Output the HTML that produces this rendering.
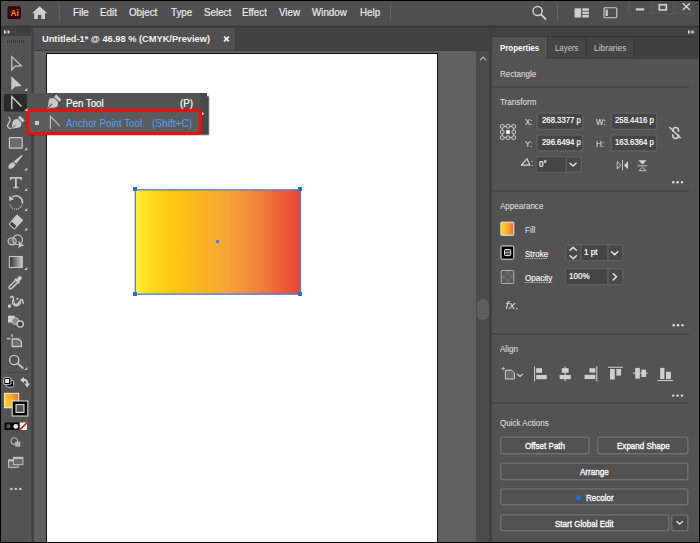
<!DOCTYPE html>
<html><head><meta charset="utf-8"><title>Illustrator</title>
<style>
html,body{margin:0;padding:0;background:#000;}
body{width:700px;height:543px;overflow:hidden;position:relative;font-family:"Liberation Sans",sans-serif;font-size:10px;color:#e6e6e6;}
#app{position:absolute;left:0;top:0;width:700px;height:543px;overflow:hidden;background:#000;}
.a{position:absolute;}
.t{position:absolute;white-space:nowrap;height:16px;line-height:16px;transform-origin:0 50%;}
.b{-webkit-text-stroke:0.22px currentColor;}
.c{-webkit-text-stroke:0.32px currentColor;}
.m{-webkit-text-stroke:0.2px currentColor;color:#ececec;}
svg{position:absolute;overflow:visible;}
.inp{position:absolute;background:#454545;border:1px solid #5f5f5f;border-radius:2px;box-sizing:border-box;}
.btn{position:absolute;border:1px solid #747474;border-radius:2px;box-sizing:border-box;background:#515151;}
.sep{position:absolute;height:2px;background:#474747;left:492px;width:197px;}
.u{text-decoration:underline dotted #d8d8d8;text-underline-offset:0.9px;text-decoration-thickness:1px;}
</style></head><body><div id="app">

<!-- top app bar -->
<div class="a" id="topbar" style="left:1px;top:1px;width:698px;height:24px;background:#4f4f4f;"></div>
<div class="a" style="left:1px;top:25px;width:698px;height:1px;background:#484848;"></div><div class="a" style="left:1px;top:26px;width:698px;height:1px;background:#383838;"></div>

<!-- second row backgrounds -->
<div class="a" style="left:1px;top:27px;width:30px;height:9px;background:#3f3f3f;"></div>
<div class="a" id="toolbar" style="left:1px;top:36px;width:30px;height:505.7px;background:#535353;"></div>
<div class="a" style="left:31px;top:27px;width:1px;height:514.7px;background:#464646;"></div><div class="a" style="left:32px;top:27px;width:1px;height:514.7px;background:#3f3f3f;"></div><div class="a" style="left:33px;top:27px;width:1px;height:514.7px;background:#484848;"></div>
<div class="a" id="tabbar" style="left:34px;top:27px;width:455px;height:23px;background:#424242;"></div>
<div class="a" id="tab" style="left:34px;top:27.6px;width:201px;height:22.8px;background:#505050;"></div>
<div class="a" style="left:1px;top:27px;width:698px;height:1px;background:#3d3d3d;"></div>
<div class="a" id="canvas" style="left:34px;top:50.4px;width:442px;height:491.3px;background:#606060;"></div>
<div class="a" style="left:34px;top:50px;width:455px;height:0.8px;background:#3c3c3c;"></div>
<div class="a" id="artboard" style="left:46px;top:52.6px;width:392px;height:489.1px;background:#fff;border-left:1px solid #111;border-top:1px solid #111;border-right:1px solid #111;box-sizing:border-box;"></div>
<div class="a" id="vscroll" style="left:476px;top:51px;width:13px;height:490.7px;background:#4b4b4b;"></div>
<div class="a" style="left:477px;top:299px;width:12px;height:21px;border-radius:6px;background:#5f5f5f;"></div>
<div class="a" style="left:489px;top:27px;width:3px;height:514.7px;background:#3e3e3e;"></div>

<!-- right panel -->
<div class="a" style="left:491.6px;top:28px;width:207.4px;height:9px;background:#424242;"></div>
<div class="a" style="left:491.6px;top:36px;width:207.4px;height:23px;background:#373737;"></div><div class="a" style="left:491.6px;top:37px;width:207.4px;height:21.6px;background:#414141;"></div>
<div class="a" id="panel" style="left:491.6px;top:59px;width:207.4px;height:482.7px;background:#535353;"></div>
<div class="a" style="left:491.6px;top:37px;width:55px;height:23px;background:#535353;"></div>
<div class="a" style="left:547.6px;top:37px;width:38.6px;height:21.6px;background:#444;"></div>
<div class="a" style="left:587.2px;top:37px;width:47px;height:21.6px;background:#444;"></div><div class="a" style="left:546.6px;top:37px;width:1px;height:21.6px;background:#373737;"></div><div class="a" style="left:586.2px;top:37px;width:1px;height:21.6px;background:#373737;"></div><div class="a" style="left:634.2px;top:37px;width:1px;height:21.6px;background:#373737;"></div>



<!-- artwork -->
<div class="a" id="art" style="left:135.5px;top:190px;width:165px;height:104px;background:linear-gradient(90deg,#fff035 0%,#fed71b 10%,#fdc90f 20%,#fbbb1e 35%,#f6a436 55%,#f1863c 72%,#ec6039 88%,#e84234 100%);"></div>
<svg width="700" height="543" viewBox="0 0 700 543" style="left:0;top:0;"><rect x="135.3" y="189.8" width="165.2" height="104.4" fill="none" stroke="#4f7de6" stroke-width="1.3"/></svg>
<div class="a" style="left:133px;top:187.2px;width:4.2px;height:4.2px;background:#2f66f0;"></div>
<div class="a" style="left:298px;top:187.2px;width:4.2px;height:4.2px;background:#2f66f0;"></div>
<div class="a" style="left:133px;top:291.8px;width:4.2px;height:4.2px;background:#2f66f0;"></div>
<div class="a" style="left:298px;top:291.8px;width:4.2px;height:4.2px;background:#2f66f0;"></div>
<div class="a" style="left:216px;top:240px;width:3.4px;height:3.4px;background:#4a7fe8;"></div>

<!-- menu text -->
<div class="t m" style="font-size:11px;transform:scaleX(0.89);left:73px;top:4px;">File</div>
<div class="t m" style="font-size:11px;transform:scaleX(0.89);left:100px;top:4px;">Edit</div>
<div class="t m" style="font-size:11px;transform:scaleX(0.89);left:129px;top:4px;">Object</div>
<div class="t m" style="font-size:11px;transform:scaleX(0.89);left:171px;top:4px;">Type</div>
<div class="t m" style="font-size:11px;transform:scaleX(0.89);left:203.5px;top:4px;">Select</div>
<div class="t m" style="font-size:11px;transform:scaleX(0.89);left:242px;top:4px;">Effect</div>
<div class="t m" style="font-size:11px;transform:scaleX(0.89);left:279px;top:4px;">View</div>
<div class="t m" style="font-size:11px;transform:scaleX(0.89);left:312px;top:4px;">Window</div>
<div class="t m" style="font-size:11px;transform:scaleX(0.89);left:360px;top:4px;">Help</div>
<div class="a" style="left:59px;top:4px;width:1.3px;height:16.6px;background:#646464;"></div>
<div class="a" style="left:390px;top:4px;width:1.3px;height:16.6px;background:#646464;"></div>
<div class="a" style="left:557.2px;top:4px;width:1.3px;height:16.6px;background:#646464;"></div>

<!-- doc tab -->
<div class="t" style="font-weight:bold;font-size:9.8px;transform:scaleX(0.945);left:42px;top:31.4px;color:#f0f0f0;">Untitled-1* @ 46.98 % (CMYK/Preview)</div>

<!-- flyout -->
<div class="a" style="left:27px;top:93.5px;width:180px;height:39.3px;background:#484848;box-shadow:2.2px 1.6px 1.2px rgba(10,10,10,0.75);"></div>
<div class="a" id="flyout" style="left:27px;top:93px;width:173px;height:40px;background:#535353;"></div>
<div class="a" style="left:200px;top:93px;width:7px;height:40px;background:#484848;"></div>
<div class="a" style="left:29px;top:112px;width:171px;height:21px;background:#5c5c5c;"></div>
<div class="t b" style="font-size:11.2px;transform:scaleX(0.87);left:66px;top:94.7px;color:#fff;">Pen Tool</div>
<div class="t b" style="font-size:11.2px;transform:scaleX(0.87);left:179.5px;top:94.7px;color:#fff;">(P)</div>
<div class="t" style="font-size:11.2px;transform:scaleX(0.87);left:66px;top:114.8px;color:#4aa0ff;">Anchor Point Tool</div>
<div class="t" style="font-size:11.2px;transform:scaleX(0.9);left:152px;top:114.8px;color:#4aa0ff;">(Shift+C)</div>
<div class="a" style="left:35px;top:121px;width:4px;height:4px;background:#c8c8c8;"></div>
<div class="a" id="redbox" style="left:26.2px;top:109.2px;width:176px;height:26.3px;border:3px solid #f70a0a;border-radius:4.5px;box-sizing:border-box;"></div>

<!-- panel text -->
<div class="t" style="font-size:9.2px;font-weight:bold;transform:scaleX(0.861);left:500px;top:40.2px;color:#fff;">Properties</div>
<div class="t" style="font-size:9.2px;transform:scaleX(0.853);left:554.5px;top:40.2px;color:#c8c8c8;">Layers</div>
<div class="t" style="font-size:9.2px;transform:scaleX(0.923);left:594px;top:40.2px;color:#c8c8c8;">Libraries</div>
<div class="t" style="font-size:9.2px;transform:scaleX(0.875);left:500px;top:66.4px;">Rectangle</div>
<div class="sep" style="top:86.2px;"></div>
<div class="t" style="font-size:9.2px;transform:scaleX(0.875);left:500px;top:94.1px;">Transform</div>
<div class="t" style="font-size:9.2px;transform:scaleX(0.875);left:525px;top:113.5px;">X:</div>
<div class="t" style="font-size:9.2px;transform:scaleX(0.875);left:525px;top:135.5px;">Y:</div>
<div class="t" style="font-size:9.2px;transform:scaleX(0.875);left:596px;top:113.5px;">W:</div>
<div class="t" style="font-size:9.2px;transform:scaleX(0.875);left:596.2px;top:135.5px;">H:</div>
<svg width="700" height="543" viewBox="0 0 700 543" style="left:0;top:0;" fill="none" stroke="#606060" stroke-width="1.4"><rect x="537.1" y="113.1" width="45.7" height="16.3" rx="2" fill="#464646"/><rect x="537.1" y="134.85" width="45.7" height="16.2" rx="2" fill="#464646"/><rect x="611.1" y="113.1" width="45.7" height="16.3" rx="2" fill="#464646"/><rect x="611.1" y="134.85" width="45.7" height="16.2" rx="2" fill="#464646"/></svg>
<div class="t b" style="font-size:9.2px;transform:scaleX(0.845);left:541.5px;top:112px;color:#fff;">268.3377 p</div>
<div class="t b" style="font-size:9.2px;transform:scaleX(0.845);left:541.5px;top:133.5px;color:#fff;">296.6494 p</div>
<div class="t b" style="font-size:9.2px;transform:scaleX(0.845);left:615.3px;top:112px;color:#fff;">258.4416 p</div>
<div class="t b" style="font-size:9.2px;transform:scaleX(0.845);left:615.3px;top:133.5px;color:#fff;">163.6364 p</div>
<svg width="700" height="543" viewBox="0 0 700 543" style="left:0;top:0;" fill="none" stroke="#5e5e5e" stroke-width="1.4"><rect x="536.1" y="156.9" width="45.2" height="15.4" rx="2.2" fill="#494949"/><rect x="536.8" y="157.6" width="28.7" height="14" fill="#444" stroke="none"/><path d="M566.2,156.9 V172.3"/><rect x="565.7" y="244.7" width="57.1" height="16.1" rx="2.2" fill="#494949"/><rect x="581.5" y="245.39999999999998" width="25.8" height="14.7" fill="#444" stroke="none"/><path d="M580.8,244.7 V260.8"/><path d="M608,244.7 V260.8"/><rect x="565.7" y="268.7" width="57.1" height="16.1" rx="2.2" fill="#494949"/><rect x="566.4" y="269.4" width="40.9" height="14.7" fill="#444" stroke="none"/><path d="M608,268.7 V284.8"/></svg>
<div class="t b" style="font-size:9.2px;transform:scaleX(0.875);left:538.6px;top:155.8px;color:#fff;">0°</div>
<div class="t" style="font-size:9.2px;transform:scaleX(0.875);left:530.8px;top:155.3px;">:</div>
<div class="sep" style="top:190.2px;"></div>
<div class="t" style="font-size:9.2px;transform:scaleX(0.875);left:500px;top:198px;">Appearance</div>
<div class="t" style="font-size:9.2px;transform:scaleX(0.875);left:525px;top:222px;">Fill</div>
<div class="t u b" style="font-size:9.2px;transform:scaleX(0.875);left:525px;top:245.7px;color:#efefef;">Stroke</div>
<div class="t u b" style="font-size:9.2px;transform:scaleX(0.875);left:525px;top:269.7px;color:#efefef;">Opacity</div>
<div class="t b" style="font-size:9.2px;transform:scaleX(0.875);left:584px;top:244.3px;color:#fff;">1 pt</div>
<div class="t b" style="font-size:9.2px;transform:scaleX(0.875);left:569px;top:267.5px;color:#fff;">100%</div>
<div class="sep" style="top:332.7px;"></div>
<div class="t" style="font-size:9.2px;transform:scaleX(0.875);left:500px;top:340.5px;">Align</div>
<div class="sep" style="top:402.4px;"></div>
<div class="t" style="font-size:9.2px;transform:scaleX(0.875);left:500px;top:414.5px;">Quick Actions</div>
<svg width="700" height="543" viewBox="0 0 700 543" style="left:0;top:0;" fill="none" stroke="#707070" stroke-width="1.4"><rect x="500.7" y="437.1" width="88.3" height="16.6" rx="2.2" fill="#515151"/><rect x="597.8" y="437.1" width="90.0" height="16.6" rx="2.2" fill="#515151"/><rect x="500.7" y="463.1" width="187.1" height="16.5" rx="2.2" fill="#515151"/><rect x="500.7" y="488.9" width="187.1" height="15.8" rx="2.2" fill="#515151"/><rect x="500.7" y="514.9" width="168.1" height="15.7" rx="2.2" fill="#515151"/><rect x="671.7" y="514.9" width="16.1" height="15.7" rx="2.2" fill="#4a4a4a"/></svg>
<div class="t b c" style="font-size:9.2px;transform:scaleX(0.875);left:524.5px;top:438.1px;color:#fff;">Offset Path</div>
<div class="t b c" style="font-size:9.2px;transform:scaleX(0.875);left:617px;top:438.1px;color:#fff;">Expand Shape</div>
<div class="t b c" style="font-size:9.2px;transform:scaleX(0.875);left:580px;top:464.1px;color:#fff;">Arrange</div>
<div class="t b c" style="font-size:9.2px;transform:scaleX(0.875);left:586px;top:489.6px;color:#fff;">Recolor</div>
<div class="t b c" style="font-size:9.2px;transform:scaleX(0.875);left:555px;top:515.6px;color:#fff;">Start Global Edit</div>
<div class="a" style="left:575.7px;top:494.5px;width:5px;height:5px;border-radius:50%;background:#1473e6;"></div>


<!-- icons -->
<svg id="ic" width="700" height="543" viewBox="0 0 700 543" style="left:0;top:0;" fill="none" stroke="none">
<!-- Ai logo -->
<rect x="7.5" y="6.3" width="13.4" height="12.8" rx="2.2" fill="#380404"/>
<text x="10.6" y="15.6" font-family="Liberation Sans, sans-serif" font-weight="bold" font-size="8.2" fill="#ff9a00">Ai</text>
<!-- home -->
<path d="M32,13.2 L39.6,6.2 L47.2,13.2 L45,13.2 L45,19 L41.3,19 L41.3,15 L37.9,15 L37.9,19 L34.2,19 L34.2,13.2 Z" fill="#cecece"/>
<!-- search -->
<circle cx="537.6" cy="11" r="4.6" stroke="#d0d0d0" stroke-width="1.5"/>
<path d="M541,14.6 L545.6,19" stroke="#d0d0d0" stroke-width="1.8" stroke-linecap="round"/>
<!-- layout icons -->
<g fill="#cfcfcf"><rect x="574.5" y="8.3" width="6.6" height="9.2"/><rect x="582.3" y="8.3" width="6.6" height="2.6"/><rect x="582.3" y="11.7" width="6.6" height="2.5"/><rect x="582.3" y="15" width="6.6" height="2.5"/></g>
<rect x="604" y="7.8" width="12.8" height="10" rx="1" stroke="#cfcfcf" stroke-width="1.1"/>
<rect x="605.6" y="9.6" width="2.2" height="6.4" fill="#cfcfcf"/>
<!-- window controls -->
<path d="M628.5,1 L628.5,10.5 Q628.5,13.6 631.6,13.6 L699,13.6" stroke="#5a5a5a" stroke-width="1"/>
<path d="M651.7,1 V13.6 M673.8,1 V13.6" stroke="#5a5a5a" stroke-width="1"/>
<rect x="635.8" y="8.3" width="8.4" height="2.2" fill="#d0d0d0"/>
<rect x="659.3" y="4.8" width="7" height="5.1" stroke="#d0d0d0" stroke-width="1.7"/>
<path d="M682.8,3.2 L690,10 M690,3.2 L682.8,10" stroke="#d0d0d0" stroke-width="1.5"/>
<!-- collapse arrows -->
<g fill="#d0d0d0"><path d="M4,29.8 L6.9,32 L4,34.2 Z M7.6,29.8 L10.5,32 L7.6,34.2 Z"/>
<path d="M688,29.8 L690.9,32 L688,34.2 Z M691.6,29.8 L694.5,32 L691.6,34.2 Z"/></g>
<!-- grip -->
<path d="M7,41.5 H24" stroke="#3b3b3b" stroke-width="3" stroke-dasharray="1 1"/>
<!-- tab close -->
<path d="M224.1,36.6 L228.9,41.4 M228.9,36.6 L224.1,41.4" stroke="#ececec" stroke-width="1.8"/>
<!-- scroll arrow -->
<path d="M480,60.3 L483.1,57.2 L486.2,60.3" stroke="#b8b8b8" stroke-width="1.2"/>

<!-- TOOLBAR -->
<g fill="#c8c8c8"><path d="M27.3,87.9 L27.3,91 L24.2,91 Z"/><path d="M27.3,107.9 L27.3,111 L24.2,111 Z"/><path d="M27.3,147.20000000000002 L27.3,150.3 L24.2,150.3 Z"/><path d="M27.3,167.5 L27.3,170.6 L24.2,170.6 Z"/><path d="M27.3,187.9 L27.3,191 L24.2,191 Z"/><path d="M27.3,207.9 L27.3,211 L24.2,211 Z"/><path d="M27.3,227.5 L27.3,230.6 L24.2,230.6 Z"/><path d="M27.3,266.9 L27.3,270 L24.2,270 Z"/><path d="M27.3,366.9 L27.3,370 L24.2,370 Z"/></g>
<path d="M11.8,56.6 L11.8,70 L15,66.4 L21.3,65.7 Z" stroke="#c8c8c8" stroke-width="1.2" stroke-linejoin="miter"/>
<path d="M11.3,76.3 L11.3,90.4 L15.2,86.7 L21.9,86 Z" fill="#c8c8c8"/>
<rect x="4" y="94" width="23" height="17.5" rx="2" fill="#2b2b2b"/>
<path d="M27.3,107.9 L27.3,111 L24.2,111 Z" fill="#c8c8c8"/>
<path d="M11.8,109.3 L11.8,96.6 L21.5,106.5" stroke="#dcdcdc" stroke-width="1.3"/>
<!-- curvature -->
<path d="M8.2,117 C10.6,118 10.6,120.5 9,122.6 C6.8,125.6 7,128.2 11,128.6" stroke="#c8c8c8" stroke-width="1.3"/>
<g transform="translate(11.4,129.6) rotate(45) translate(-0.4,0) scale(1.12,1)">
<path d="M0,0 C-1,-3 -4.3,-6 -4.3,-9 L-2.3,-12 L2.3,-12 L4.3,-9 C4.3,-6 1,-3 0,0 Z" fill="#c8c8c8"/>
<path d="M0,-1 L0,-6.5" stroke="#4f4f4f" stroke-width="0.8"/>
<rect x="-2.9" y="-15.9" width="5.8" height="3" fill="#c8c8c8"/></g>
<!-- rectangle -->
<rect x="9.4" y="137.6" width="12.8" height="10.6" rx="0.8" fill="#6a6a6a" stroke="#c8c8c8" stroke-width="1.2"/>
<!-- brush -->
<g transform="translate(8.9,168.7) rotate(45)" fill="#c8c8c8">
<path d="M0,0 C-3.2,-1 -3.2,-5 -1.7,-7.6 L1.7,-7.6 C3,-5 2.4,-1.5 0,0 Z"/>
<path d="M-1.6,-8.5 L1.6,-8.5 L0.7,-18.6 L-0.7,-18.6 Z"/></g>
<!-- type -->
<path d="M10,177 H21.8 V180.3 H20.8 C20.6,179 20,178.5 18.5,178.5 H16.8 V186 C16.8,187 17.2,187.2 18.8,187.3 V188.3 H13 V187.3 C14.6,187.2 15,187 15,186 V178.5 H13.3 C11.8,178.5 11.2,179 11,180.3 H10 Z" fill="#c8c8c8"/>
<!-- rotate -->
<path d="M12.2,197.2 A6.3,6.3 0 0 1 22.1,203.8" stroke="#c8c8c8" stroke-width="1.6"/>
<path d="M9.1,195.9 L9.3,201 L14,199.2 Z" fill="#c8c8c8"/>
<path d="M21.8,205.2 A6.3,6.3 0 0 1 9.8,204.2" stroke="#c8c8c8" stroke-width="1.2" stroke-dasharray="1 1.1"/>
<!-- eraser -->
<g transform="translate(15.9,222) rotate(42)">
<rect x="-4.3" y="-6.4" width="8.6" height="8.6" rx="0.6" fill="#c8c8c8"/>
<rect x="-3.7" y="2.2" width="7.4" height="4" rx="0.8" stroke="#c8c8c8" stroke-width="1.1" fill="#3c3c3c"/></g>
<!-- shape builder -->
<ellipse cx="12.1" cy="241.3" rx="4.1" ry="3.6" stroke="#c8c8c8" stroke-width="1.1" fill="#6a6a6a"/>
<circle cx="17.7" cy="239.7" r="4.8" stroke="#c8c8c8" stroke-width="1.1"/>
<path d="M18.3,240.4 L18.3,249 L20.9,246.4 L24.9,246 Z" fill="#c8c8c8" stroke="#4f4f4f" stroke-width="0.5"/>
<!-- gradient -->
<defs><linearGradient id="gg" x1="0" x2="1" y1="0" y2="0"><stop offset="0" stop-color="#2e2e2e"/><stop offset="1" stop-color="#c8c8c8"/></linearGradient>
<linearGradient id="fs" x1="0" x2="1" y1="0.6" y2="0.2"><stop offset="0" stop-color="#ffd21e"/><stop offset="0.45" stop-color="#fbb428"/><stop offset="1" stop-color="#ee6a3a"/></linearGradient></defs>
<rect x="9.4" y="256.5" width="12.8" height="11" fill="url(#gg)" stroke="#c8c8c8" stroke-width="1.1"/>
<!-- eyedropper -->
<g transform="translate(9.5,288.5) rotate(45)">
<path d="M-1.5,-9.8 L-1.5,-1.4 A1.5,1.5 0 0 0 1.5,-1.4 L1.5,-9.8" stroke="#cdcdcd" stroke-width="1.45"/>
<rect x="-3" y="-12" width="6" height="2.3" fill="#c8c8c8"/>
<rect x="-1.9" y="-16.6" width="3.8" height="5" rx="1.6" fill="#c8c8c8"/></g>
<!-- width tool -->
<path d="M10.4,297.6 C11.4,295.6 13.6,296.2 13.4,298.6 C13.2,301 12.6,303.2 14.6,304.4 C17.4,305.8 19.4,303 20.2,300.8 C21,298.6 23,298.8 23.2,303.2" stroke="#c8c8c8" stroke-width="1.5" stroke-linecap="round"/>
<path d="M12.6,300.5 C12.4,303 13,304.6 15,305.6 C18,306.6 20,304 20.8,301.6 L20,300.6 C19,303 17.4,305 14.8,304 C13.4,303.2 13.4,302 13.6,300.4 Z" fill="#c8c8c8" stroke="#c8c8c8" stroke-width="1.2" stroke-linejoin="round"/>
<rect x="8" y="304.8" width="2.8" height="2.8" fill="#d4d4d4"/>
<path d="M9.4,306.1 L13.2,302.6" stroke="#c8c8c8" stroke-width="0.8"/>
<circle cx="13.5" cy="302.5" r="1" fill="#4f4f4f" stroke="#f0f0f0" stroke-width="0.6"/>
<circle cx="17.4" cy="298.8" r="1.1" fill="#c8c8c8"/>
<!-- blend -->
<rect x="8" y="315.7" width="6.9" height="6.9" fill="#d0d0d0"/>
<circle cx="15.3" cy="321.1" r="3.4" fill="#8a8a8a" stroke="#c4c4c4" stroke-width="1"/>
<circle cx="20.2" cy="324.1" r="3.1" fill="#444" stroke="#c8c8c8" stroke-width="1.3"/>
<!-- artboard -->
<path d="M12.1,334 V337 M6.7,338.6 H10.5" stroke="#c8c8c8" stroke-width="1.3"/>
<path d="M12.2,339 H18.6 L21.4,341.8 V346.5 H12.2 Z" fill="#6e6e6e" stroke="#c8c8c8" stroke-width="1.3" stroke-linejoin="round"/>
<!-- zoom -->
<circle cx="14.2" cy="360" r="4.6" stroke="#c8c8c8" stroke-width="1.4"/>
<path d="M17.6,363.4 L22.8,368" stroke="#c8c8c8" stroke-width="1.7" stroke-linecap="round"/>
<path d="M3,372.5 H28" stroke="#484848" stroke-width="1"/>
<!-- default fill/stroke -->
<rect x="6.3" y="380.3" width="7.4" height="6.8" rx="1.5" fill="#000" stroke="#dadada" stroke-width="0.9"/>
<rect x="3.7" y="377.6" width="7.3" height="7" rx="1.5" fill="#000" stroke="#dadada" stroke-width="0.9"/>
<rect x="5.1" y="379" width="3.9" height="3.9" fill="#fff"/>
<!-- swap -->
<path d="M22.6,379.9 C26,379.2 27.6,381.2 27.3,384.6" stroke="#d4d4d4" stroke-width="1.8"/>
<path d="M20.2,380 L24,376.9 L24,383 Z M24.4,383.6 L30,383.6 L27.2,387.6 Z" fill="#d4d4d4"/>
<!-- fill swatch -->
<rect x="4.4" y="393.3" width="14.3" height="14.5" fill="url(#fs)" stroke="#f4f4f4" stroke-width="0.9"/>
<!-- stroke swatch -->
<rect x="12.2" y="401" width="15.6" height="15" fill="#000" stroke="#e4e4e4" stroke-width="1"/>
<rect x="16" y="404.6" width="8" height="7.8" fill="#555" stroke="#f0f0f0" stroke-width="1"/>
<!-- color modes -->
<rect x="4.5" y="422.5" width="15" height="7.5" fill="#0a0a0a"/>
<rect x="6.8" y="424.4" width="3.4" height="3.6" fill="#5a5a5a"/>
<ellipse cx="15.8" cy="426.4" rx="2.4" ry="2.3" fill="#f0f0f0"/>
<rect x="19.8" y="422.5" width="7.2" height="7.5" fill="#fff"/>
<path d="M20,429.6 L26.8,422.9" stroke="#ee1111" stroke-width="1.5"/>
<!-- draw mode -->
<circle cx="14.3" cy="441.1" r="3.3" stroke="#b4b4b4" stroke-width="1.1"/>
<rect x="15.2" y="441.6" width="5" height="5" fill="#b4b4b4"/>
<!-- screen mode -->
<rect x="8.6" y="459.8" width="9.6" height="7.6" fill="#6a6a6a" stroke="#c8c8c8" stroke-width="0.9"/>
<rect x="8.6" y="459.8" width="9.6" height="1.6" fill="#c8c8c8"/>
<rect x="13.5" y="457.3" width="9.4" height="7.4" fill="#6a6a6a" stroke="#c8c8c8" stroke-width="0.9"/>
<rect x="13.5" y="457.3" width="9.4" height="1.6" fill="#c8c8c8"/>
<!-- dots -->
<g fill="#c8c8c8"><circle cx="11.3" cy="489" r="1.3"/><circle cx="15.8" cy="489" r="1.3"/><circle cx="20.3" cy="489" r="1.3"/></g>

<!-- FLYOUT icons -->
<g transform="translate(47.4,108.6) rotate(45) scale(1.25,1.02)">
<path d="M0,0 C-1,-3 -4.3,-6 -4.3,-9 L-2.3,-12 L2.3,-12 L4.3,-9 C4.3,-6 1,-3 0,0 Z" fill="#c8c8c8"/>
<path d="M0,-1 L0,-6.5" stroke="#535353" stroke-width="0.8"/>
<rect x="-2.9" y="-15.9" width="5.8" height="3" fill="#c8c8c8"/></g>
<path d="M50.4,129.1 L50.4,116.3 L59.7,125.8" stroke="#c8c8c8" stroke-width="1.1"/>
<path d="M202,112 L204.4,113.6 L202,115.2 Z" fill="#d0d0d0"/>
</svg>


<!-- PANEL icons -->
<svg id="pic" width="700" height="543" viewBox="0 0 700 543" style="left:0;top:0;" fill="none" stroke="none">
<g stroke="#d8d8d8" stroke-width="0.9" fill="none"><rect x="500.5" y="124.6" width="3.4" height="3.4" rx="0.8" fill="none"/><rect x="500.5" y="130.3" width="3.4" height="3.4" rx="0.8" fill="none"/><rect x="500.5" y="136.0" width="3.4" height="3.4" rx="0.8" fill="none"/><rect x="506.3" y="124.6" width="3.4" height="3.4" rx="0.8" fill="none"/><rect x="506.3" y="136.0" width="3.4" height="3.4" rx="0.8" fill="none"/><rect x="512.0999999999999" y="124.6" width="3.4" height="3.4" rx="0.8" fill="none"/><rect x="512.0999999999999" y="130.3" width="3.4" height="3.4" rx="0.8" fill="none"/><rect x="512.0999999999999" y="136.0" width="3.4" height="3.4" rx="0.8" fill="none"/><path d="M504,126.3 H506.2 M509.8,126.3 H512 M504,137.7 H506.2 M509.8,137.7 H512 M502.2,128.1 V130.2 M502.2,133.8 V135.9 M513.8,128.1 V130.2 M513.8,133.8 V135.9"/></g><rect x="506.2" y="130.2" width="3.6" height="3.6" fill="#fff"/>
<!-- link -->
<g stroke="#d6d6d6" stroke-width="1.5">
<path d="M672.7,131.8 V130.4 A2.9,2.9 0 0 1 678.5,130.4 V131.8 M672.7,134.2 V135.6 A2.9,2.9 0 0 0 678.5,135.6 V134.2"/>
<path d="M669.3,127 L680.7,138.2"/></g>
<!-- angle -->
<path d="M527,158.8 L521.4,165.2 H529.8 Z" stroke="#d4d4d4" stroke-width="1.2" stroke-linejoin="round"/>

<!-- chevrons -->
<g stroke="#e6e6e6" stroke-width="1.3" stroke-linecap="round" stroke-linejoin="round">
<path d="M570,163.2 L573,166 L576,163.2" stroke-width="1.5"/>
<path d="M570,250.3 L573.2,247.4 L576.4,250.3" stroke-width="1.5"/>
<path d="M570,255.8 L573.2,258.7 L576.4,255.8" stroke-width="1.5"/>
<path d="M611.4,251.7 L614.6,254.6 L617.8,251.7" stroke-width="1.5"/>
<path d="M613.2,273.7 L616.5,276.8 L613.2,279.9" stroke-width="1.5"/>
<path d="M676.8,521.4 L679.7,524.1 L682.6,521.4"/>
</g>
<!-- flips -->
<path d="M617.2,161.6 V169 L621,165.3 Z" stroke="#d0d0d0" stroke-width="0.9"/>
<path d="M622.5,160 V170.5" stroke="#d0d0d0" stroke-width="0.9"/>
<path d="M628,161.3 V169.3 L623.9,165.3 Z" fill="#d0d0d0"/>
<path d="M638.4,160.3 H646.6 L642.5,164.6 Z" fill="#d0d0d0"/>
<path d="M637.6,165.8 H647.2" stroke="#d0d0d0" stroke-width="0.9"/>
<path d="M638.9,170.7 H646.1 L642.5,167.2 Z" stroke="#d0d0d0" stroke-width="0.9"/>
<!-- more dots -->
<g fill="#e0e0e0"><circle cx="673.2" cy="182.3" r="1.2"/><circle cx="677.6" cy="182.3" r="1.2"/><circle cx="682.0" cy="182.3" r="1.2"/><circle cx="673.7" cy="325.2" r="1.2"/><circle cx="678.1" cy="325.2" r="1.2"/><circle cx="682.5" cy="325.2" r="1.2"/><circle cx="673.2" cy="395.6" r="1.2"/><circle cx="677.6" cy="395.6" r="1.2"/><circle cx="682.0" cy="395.6" r="1.2"/></g>
<!-- appearance swatches -->
<defs><linearGradient id="pf" x1="0" x2="1" y1="0" y2="0"><stop offset="0" stop-color="#ffd91e"/><stop offset="0.5" stop-color="#f9ac2e"/><stop offset="1" stop-color="#ee6a3a"/></linearGradient>
<pattern id="chk" x="501.6" y="271" width="8" height="8" patternUnits="userSpaceOnUse"><rect width="8" height="8" fill="#686868"/><rect width="4" height="4" fill="#585858"/><rect x="4" y="4" width="4" height="4" fill="#585858"/></pattern></defs>
<rect x="500.9" y="222.2" width="12.9" height="13.1" rx="0.6" fill="url(#pf)" stroke="#ececec" stroke-width="1"/>
<rect x="501" y="246" width="12.8" height="13.2" rx="1" fill="#000" stroke="#e8e8e8" stroke-width="1"/>
<rect x="504.5" y="249.5" width="6.2" height="6.1" rx="1" fill="#4c4c4c" stroke="#f0f0f0" stroke-width="1"/>
<path d="M505,252.5 H510.2" stroke="#bbb" stroke-width="0.7"/>
<rect x="501.2" y="270.5" width="12.6" height="13" rx="0.6" fill="url(#chk)" stroke="#b8b8b8" stroke-width="0.9"/>
<!-- fx -->
<text x="505.6" y="308.8" font-family="Liberation Sans, sans-serif" font-style="italic" font-size="11.5" textLength="9.6" lengthAdjust="spacingAndGlyphs" fill="#dcdcdc">fx</text>
<path d="M515.6,308.2 H518 L516.8,309.8 Z" fill="#dcdcdc"/>
<!-- align -->
<g fill="#cfcfcf">
<path d="M505.4,370.2 H511.6 L514.4,373 V379 H505.4 Z" fill="#6a6a6a" stroke="#cfcfcf" stroke-width="1"/>
<path d="M503.2,366.8 V370.4 M501.4,368.6 H505" stroke="#cfcfcf" stroke-width="0.8"/>
<path d="M517.2,373.8 L520,376.4 L522.8,373.8" stroke="#e0e0e0" stroke-width="1.1" fill="none"/>
<rect x="534.1" y="366.4" width="1" height="15"/><rect x="536.2" y="368.2" width="5.8" height="4.6"/><rect x="536.2" y="375" width="10.6" height="4.2"/>
<rect x="564.6" y="366.4" width="1" height="15"/><rect x="561.8" y="368.2" width="6.8" height="4.6"/><rect x="559.6" y="375" width="11.2" height="4.2"/>
<rect x="596.3" y="366.2" width="1" height="15.2"/><rect x="589.4" y="368.2" width="6" height="4.4"/><rect x="584.6" y="374.8" width="10.8" height="4.2"/>
<rect x="608" y="366.8" width="15" height="1"/><rect x="610" y="369" width="4.8" height="10.5"/><rect x="616.4" y="369" width="4.7" height="6.6"/>
<rect x="632.8" y="372.6" width="15" height="1"/><rect x="635.2" y="367.9" width="4.6" height="10.8"/><rect x="641.4" y="369.6" width="4.6" height="7.4"/>
<rect x="657.7" y="380" width="15.4" height="1"/><rect x="660.2" y="367.9" width="4.2" height="11.1"/><rect x="666" y="371.8" width="4.9" height="7.2"/>
</g>
</svg>

</div></body></html>
